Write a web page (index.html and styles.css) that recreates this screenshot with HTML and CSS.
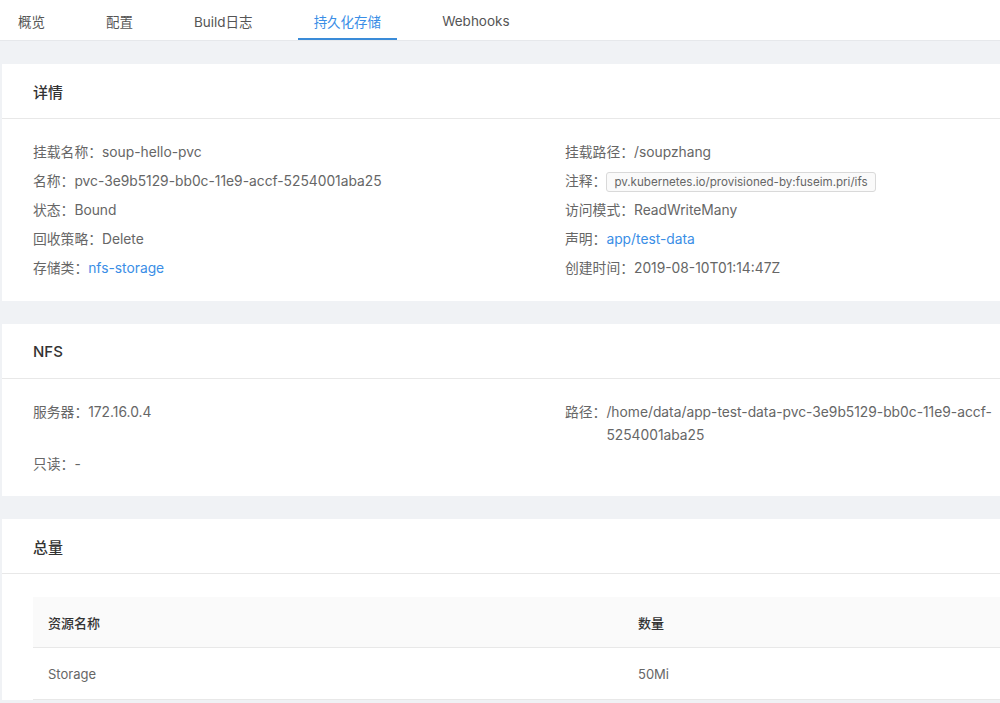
FILE: index.html
```html
<!DOCTYPE html>
<html lang="zh-CN">
<head>
<meta charset="utf-8">
<title>持久化存储</title>
<link rel="stylesheet" href="styles.css">
</head>
<body>
<nav class="tabs">
  <a class="tab">概览</a>
  <a class="tab">配置</a>
  <a class="tab">Build日志</a>
  <a class="tab active">持久化存储</a>
  <a class="tab">Webhooks</a>
</nav>
<main class="content">
  <section class="card">
    <header class="card-head">详情</header>
    <div class="card-body grid">
      <div class="item"><span class="label">挂载名称：</span><span class="value">soup-hello-pvc</span></div>
      <div class="item"><span class="label">挂载路径：</span><span class="value">/soupzhang</span></div>
      <div class="item"><span class="label">名称：</span><span class="value">pvc-3e9b5129-bb0c-11e9-accf-5254001aba25</span></div>
      <div class="item"><span class="label">注释：</span><span class="value"><span class="tag">pv.kubernetes.io/provisioned-by:fuseim.pri/ifs</span></span></div>
      <div class="item"><span class="label">状态：</span><span class="value">Bound</span></div>
      <div class="item"><span class="label">访问模式：</span><span class="value">ReadWriteMany</span></div>
      <div class="item"><span class="label">回收策略：</span><span class="value">Delete</span></div>
      <div class="item"><span class="label">声明：</span><span class="value link">app/test-data</span></div>
      <div class="item"><span class="label">存储类：</span><span class="value link">nfs-storage</span></div>
      <div class="item"><span class="label">创建时间：</span><span class="value">2019-08-10T01:14:47Z</span></div>
    </div>
  </section>
  <section class="card">
    <header class="card-head">NFS</header>
    <div class="card-body grid compact">
      <div class="item"><span class="label">服务器：</span><span class="value">172.16.0.4</span></div>
      <div class="item"><span class="label">路径：</span><span class="value">/home/data/app-test-data-pvc-3e9b5129-bb0c-11e9-accf-5254001aba25</span></div>
      <div class="item"><span class="label">只读：</span><span class="value">-</span></div>
    </div>
  </section>
  <section class="card">
    <header class="card-head">总量</header>
    <div class="card-body table-body">
      <table class="table">
        <thead>
          <tr><th class="col-name">资源名称</th><th>数量</th></tr>
        </thead>
        <tbody>
          <tr><td>Storage</td><td>50Mi</td></tr>
        </tbody>
      </table>
    </div>
  </section>
</main>
</body>
</html>
```

FILE: styles.css
```css
html, body {
  margin: 0;
  padding: 0;
  overflow: hidden;
}
body {
  background: #f0f2f5;
  font-family: "Inter", "Noto Sans CJK SC", sans-serif;
  font-size: 13.8px;
  color: #666;
}
.tabs {
  display: flex;
  gap: 29px;
  height: 40px;
  padding-left: 2px;
  background: #fff;
  border-bottom: 1px solid #e6e8eb;
}
.tab {
  display: flex;
  align-items: center;
  padding: 4px 16px 0;
  font-size: 13.5px;
  color: #555;
  border-bottom: 2px solid transparent;
  box-sizing: border-box;
  height: 40px;
}
.tab.active {
  color: #3a8ee6;
  border-bottom-color: #3a8bd8;
}
.content {
  display: flex;
  flex-direction: column;
  gap: 23px;
  padding: 23px 0 0 2px;
  width: 1048px;
}
.card {
  background: #fff;
}
.card-head {
  height: 55px;
  box-sizing: border-box;
  display: flex;
  align-items: center;
  padding: 1px 31px 0;
  font-size: 15px;
  font-weight: 500;
  color: #333;
  border-bottom: 1px solid #e8e8e8;
}
.card-body {
  padding: 22px 31px 21px;
}
.card-body.compact {
  padding-bottom: 20px;
}
.grid {
  display: grid;
  grid-template-columns: 532px 1fr;
  row-gap: 6px;
}
.item {
  display: flex;
  align-items: flex-start;
  line-height: 23px;
}
.label {
  flex: none;
  color: #666;
}
.value {
  color: #666;
  min-width: 0;
}
.link {
  color: #3a8ee6;
}
.tag {
  display: inline-block;
  font-size: 11.6px;
  line-height: 18px;
  padding: 0 7px;
  border: 1px solid #d9d9d9;
  border-radius: 3px;
  background: #fafafa;
  color: #666;
  vertical-align: middle;
}
.table-body {
  padding: 23px 31px 0;
}
.table {
  width: 100%;
  border-collapse: collapse;
  font-size: 13px;
}
.table th {
  height: 50px;
  padding: 0 15px;
  text-align: left;
  font-weight: 500;
  color: #333;
  background: #fafafa;
  border-bottom: 1px solid #e8e8e8;
}
.table .col-name {
  width: 560px;
}
.table td {
  height: 51px;
  padding: 0 15px;
  color: #666;
  border-bottom: 1px solid #e8e8e8;
}
```
